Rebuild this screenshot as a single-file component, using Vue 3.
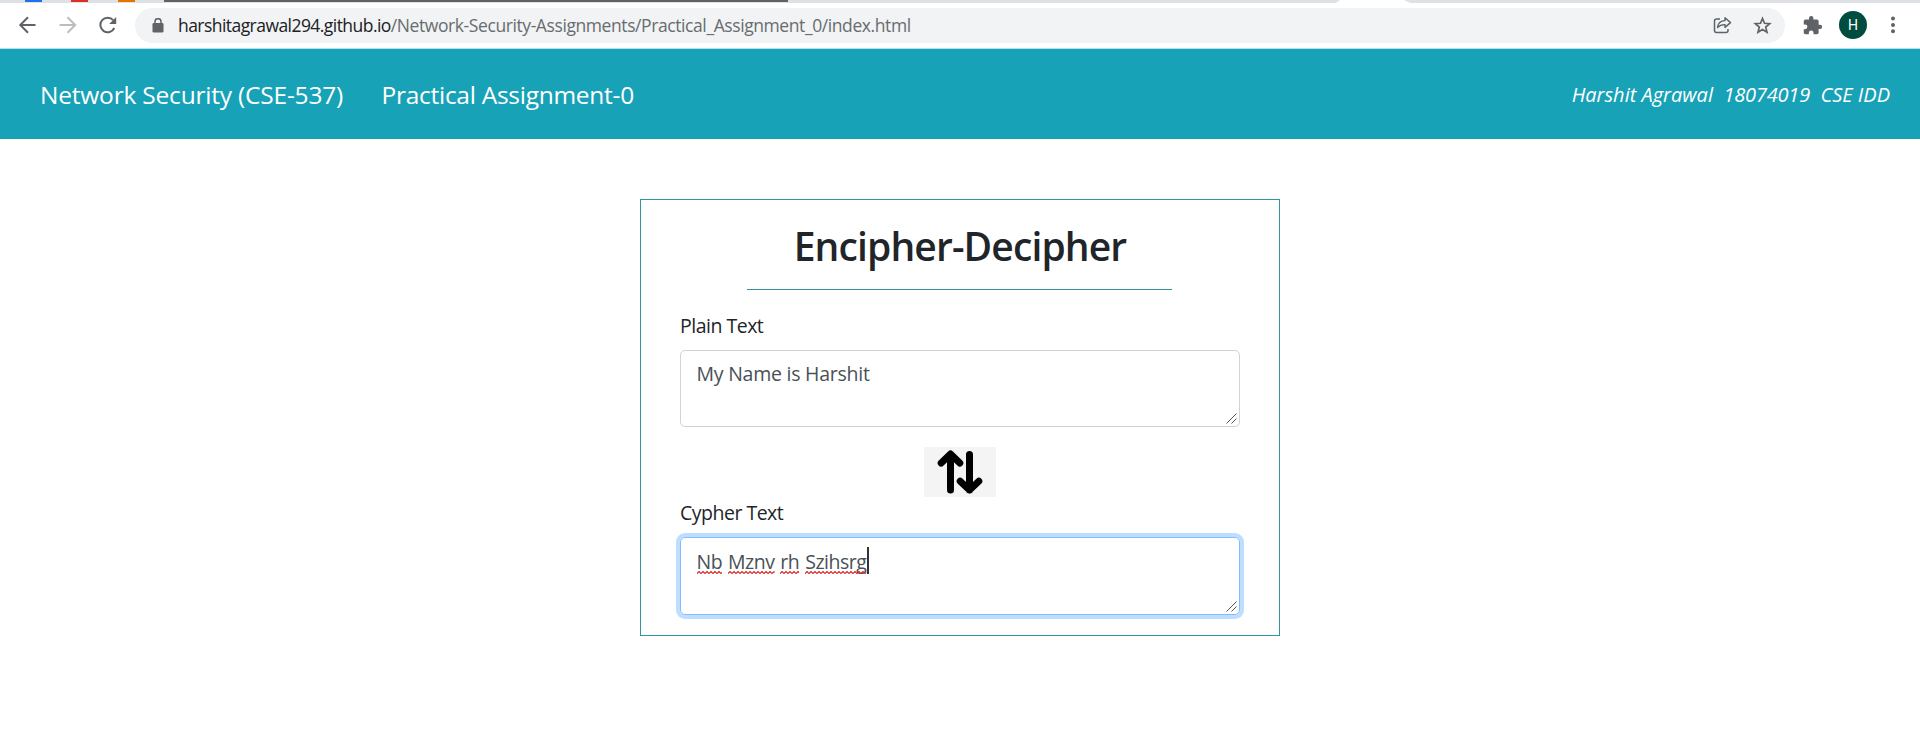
<script setup>
const cipherWords = ['Nb', 'Mznv', 'rh', 'Szihsrg']
</script>

<template>
  <div class="screen">
    <div class="tabstrip">
      <i class="fav blue"></i><i class="fav red"></i><i class="fav orange"></i>
      <i class="shade"></i>
      <i class="active-tab"></i>
    </div>
    <div class="toolbar">
      <svg class="nav-icons" width="135" height="45" viewBox="0 3 135 45" fill="none" stroke-width="2">
        <path d="M35.500 25H20.500M28 17.300L20.300 25L28 32.700" stroke="#5f6368" />
        <path d="M59.500 25H75M67.500 17.300L75.200 25L67.500 32.700" stroke="#bbbdbf" />
        <path d="M114.300 28A7.300 7.300 0 1 1 113.200 20.200" stroke="#5f6368" />
        <path d="M116.200 17V24H109.200Z" fill="#5f6368" />
      </svg>
      <div class="omnibox">
        <svg class="lock" width="12" height="15" viewBox="0 0 12 15">
          <rect x="0.500" y="5" width="11" height="9.500" rx="1.300" fill="#5f6368" />
          <path d="M3 6V3.700a3 3 0 0 1 6 0V6" fill="none" stroke="#5f6368" stroke-width="1.500" />
        </svg>
        <div class="url"><span class="host">harshitagrawal294.github.io</span><span class="path">/Network-Security-Assignments/Practical_Assignment_0/index.html</span></div>
        <svg class="actions" width="72" height="35" viewBox="1707 8 72 35" fill="none" stroke="#5f6368">
          <path d="M1720 19H1716.500Q1714.500 19 1714.500 21V30.500Q1714.500 32.500 1716.500 32.500H1726Q1728 32.500 1728 30.500V29" stroke-width="1.500" />
          <path d="M1717.500 27.500C1718 22.500 1720.500 20.700 1725 20.600V17.800L1730.500 22.600L1725 27.400V24.600C1721.500 24.500 1719.500 25.300 1717.500 27.500Z" stroke-width="1.400" stroke-linejoin="round" />
          <path d="M1762.500 18.500L1764.500 23.300L1769.700 23.700L1765.700 27.100L1767 32.200L1762.500 29.500L1758 32.200L1759.300 27.100L1755.300 23.700L1760.500 23.300Z" stroke-width="1.700" />
        </svg>
      </div>
      <svg class="puzzle" width="21" height="21" viewBox="0 0 24 24">
        <path fill="#5f6368" d="M20.500 11H19V7c0-1.100-.9-2-2-2h-4V3.500a2.500 2.500 0 0 0-5 0V5H4c-1.100 0-2 .9-2 2v3.800h1.500a2.700 2.700 0 0 1 0 5.400H2V20c0 1.100.9 2 2 2h3.800v-1.500a2.700 2.700 0 0 1 5.400 0V22H17c1.100 0 2-.9 2-2v-4h1.500a2.500 2.500 0 0 0 0-5z" />
      </svg>
      <div class="avatar">H</div>
      <svg class="kebab" width="6" height="18" viewBox="0 0 6 18" fill="#5f6368">
        <circle cx="3" cy="2.600" r="2" /><circle cx="3" cy="9" r="2" /><circle cx="3" cy="15.300" r="2" />
      </svg>
    </div>

    <header class="navbar">
      <span class="course">Network Security (CSE-537)</span>
      <span class="assignment">Practical Assignment-0</span>
      <span class="author"><span>Harshit Agrawal</span><span class="roll">18074019</span><span>CSE IDD</span></span>
    </header>

    <main class="card">
      <h1>Encipher-Decipher</h1>
      <div class="rule"></div>
      <label class="plain-label">Plain Text</label>
      <div class="field plain">
        <span class="plain-value">My Name is Harshit</span>
        <svg class="grip" width="11" height="11" viewBox="0 0 11 11"><path d="M0.500 10.500L10.500 0.500M5.500 10.500L10.500 5.500" stroke="#555" /></svg>
      </div>
      <div class="swap">
        <svg width="72" height="50" viewBox="0 0 72 50" fill="none" stroke="#000" stroke-width="7" stroke-linecap="round" stroke-linejoin="round">
          <path d="M26.500 43V7.500M17.200 16L26.500 7L35.800 16" />
          <path d="M45.500 7.500V43M36.200 34.200L45.500 43L54.800 34.200" />
        </svg>
      </div>
      <label class="cypher-label">Cypher Text</label>
      <div class="field focused">
        <span class="cipher-value"><span v-for="word in cipherWords" :key="word" class="word">{{ word }}<svg class="squiggle" height="3"><defs><pattern :id="'wave-' + word" width="4" height="3" patternUnits="userSpaceOnUse"><path d="M-1 1.500L0 2.500L2 .5L4 2.500L5 1.500" fill="none" stroke="#d92b2b" stroke-width="1.200" /></pattern></defs><rect width="100%" height="3" :fill="'url(#wave-' + word + ')'" /></svg></span></span><i class="caret"></i>
        <svg class="grip" width="11" height="11" viewBox="0 0 11 11"><path d="M0.500 10.500L10.500 0.500M5.500 10.500L10.500 5.500" stroke="#555" /></svg>
      </div>
    </main>
  </div>
</template>

<style>
body { margin: 0; background: #fff; }
</style>

<style scoped>
.screen {
  width: 1920px;
  height: 751px;
  overflow: hidden;
  background: #fff;
  color: #212529;
  font-family: "Open Sans", "Noto Sans", sans-serif;
}
.screen * { box-sizing: border-box; }
.tabstrip {
  display: flex;
  height: 3px;
  background: #dee1e6;
}
.fav { width: 17px; height: 2px; }
.blue { margin-left: 25px; background: #1a73e8; }
.red { margin-left: 29px; background: #d93025; }
.orange { margin-left: 30px; background: #e37400; }
.shade { width: 624px; height: 2px; margin-left: 29px; background: #5f6368; }
.active-tab { width: 74px; height: 3px; margin-left: 548px; background: #fff; clip-path: polygon(4px 0, 68px 0, 74px 100%, 0 100%); }
.toolbar {
  display: flex;
  align-items: center;
  height: 46px;
  padding-bottom: 1px;
  border-bottom: 1px solid #b5e2e8;
}
.nav-icons { flex: none; }
.omnibox {
  display: flex;
  align-items: center;
  flex: none;
  width: 1650px;
  height: 35px;
  padding-left: 17px;
  border-radius: 18px;
  background: #f1f3f4;
}
.lock { flex: none; }
.url {
  flex: 1;
  margin-left: 14px;
  font-size: 17.5px;
  line-height: 30px;
  white-space: nowrap;
}
.host { color: #202124; letter-spacing: -0.55px; }
.path { color: #686c70; letter-spacing: -0.41px; }
.actions { margin-right: 6px; }
.puzzle { margin-left: 17px; }
.avatar {
  width: 28px;
  height: 28px;
  margin-left: 16px;
  border-radius: 50%;
  background: #004d40;
  color: #fff;
  font: 14px/28px Roboto, sans-serif;
  text-align: center;
}
.kebab { margin-left: 23px; }
.navbar {
  display: flex;
  align-items: center;
  height: 90px;
  padding: 0 30px 0 40px;
  background: #17a2b8;
  color: #fff;
  font-size: 24.500px;
  white-space: nowrap;
}
.course { width: 341.500px; letter-spacing: -0.2px; }
.assignment { letter-spacing: -0.27px; }
.author {
  display: flex;
  gap: 10.500px;
  margin-left: auto;
  font-size: 20px;
  font-style: italic;
  letter-spacing: 0;
}
.roll { letter-spacing: -0.2px; }
.card {
  display: flex;
  flex-direction: column;
  width: 640px;
  height: 437px;
  margin: 60px auto 0;
  padding: 22px 39px 0;
  border: 1px solid #30959d;
}
h1 {
  margin: 0;
  font-size: 39px;
  font-weight: 600;
  line-height: 48px;
  letter-spacing: -0.87px;
  text-align: center;
}
.rule {
  flex: none;
  width: 425px;
  height: 1px;
  margin: 19px 0 21px 67px;
  background: #30959d;
}
label {
  height: 30px;
  margin-bottom: 9px;
  font-size: 19.500px;
  line-height: 30px;
  letter-spacing: -0.5px;
}
.field {
  position: relative;
  display: flex;
  align-items: flex-start;
  flex: none;
  height: 77px;
  padding: 8px 15.500px;
  border: 1px solid #ced4da;
  border-radius: 5px;
  color: #495057;
  font-size: 19.500px;
  line-height: 30px;
  letter-spacing: -0.4px;
}
.plain-value { letter-spacing: -0.24px; }
.swap {
  width: 72px;
  height: 50px;
  margin: 20px auto 1px;
  background: #f4f4f4;
}
.swap svg { display: block; }
.focused {
  height: 78px;
  padding-top: 9px;
  border-color: #80bdff;
  box-shadow: 0 0 0 4px #bfdeff;
}
.cipher-value { display: flex; gap: 5.800px; letter-spacing: -0.46px; }
.word { position: relative; }
.squiggle { position: absolute; left: 0; bottom: 3px; width: 100%; }
.caret { width: 2px; height: 27px; margin-top: 0; background: #333; }
.grip { position: absolute; right: 2px; bottom: 2px; }
</style>
